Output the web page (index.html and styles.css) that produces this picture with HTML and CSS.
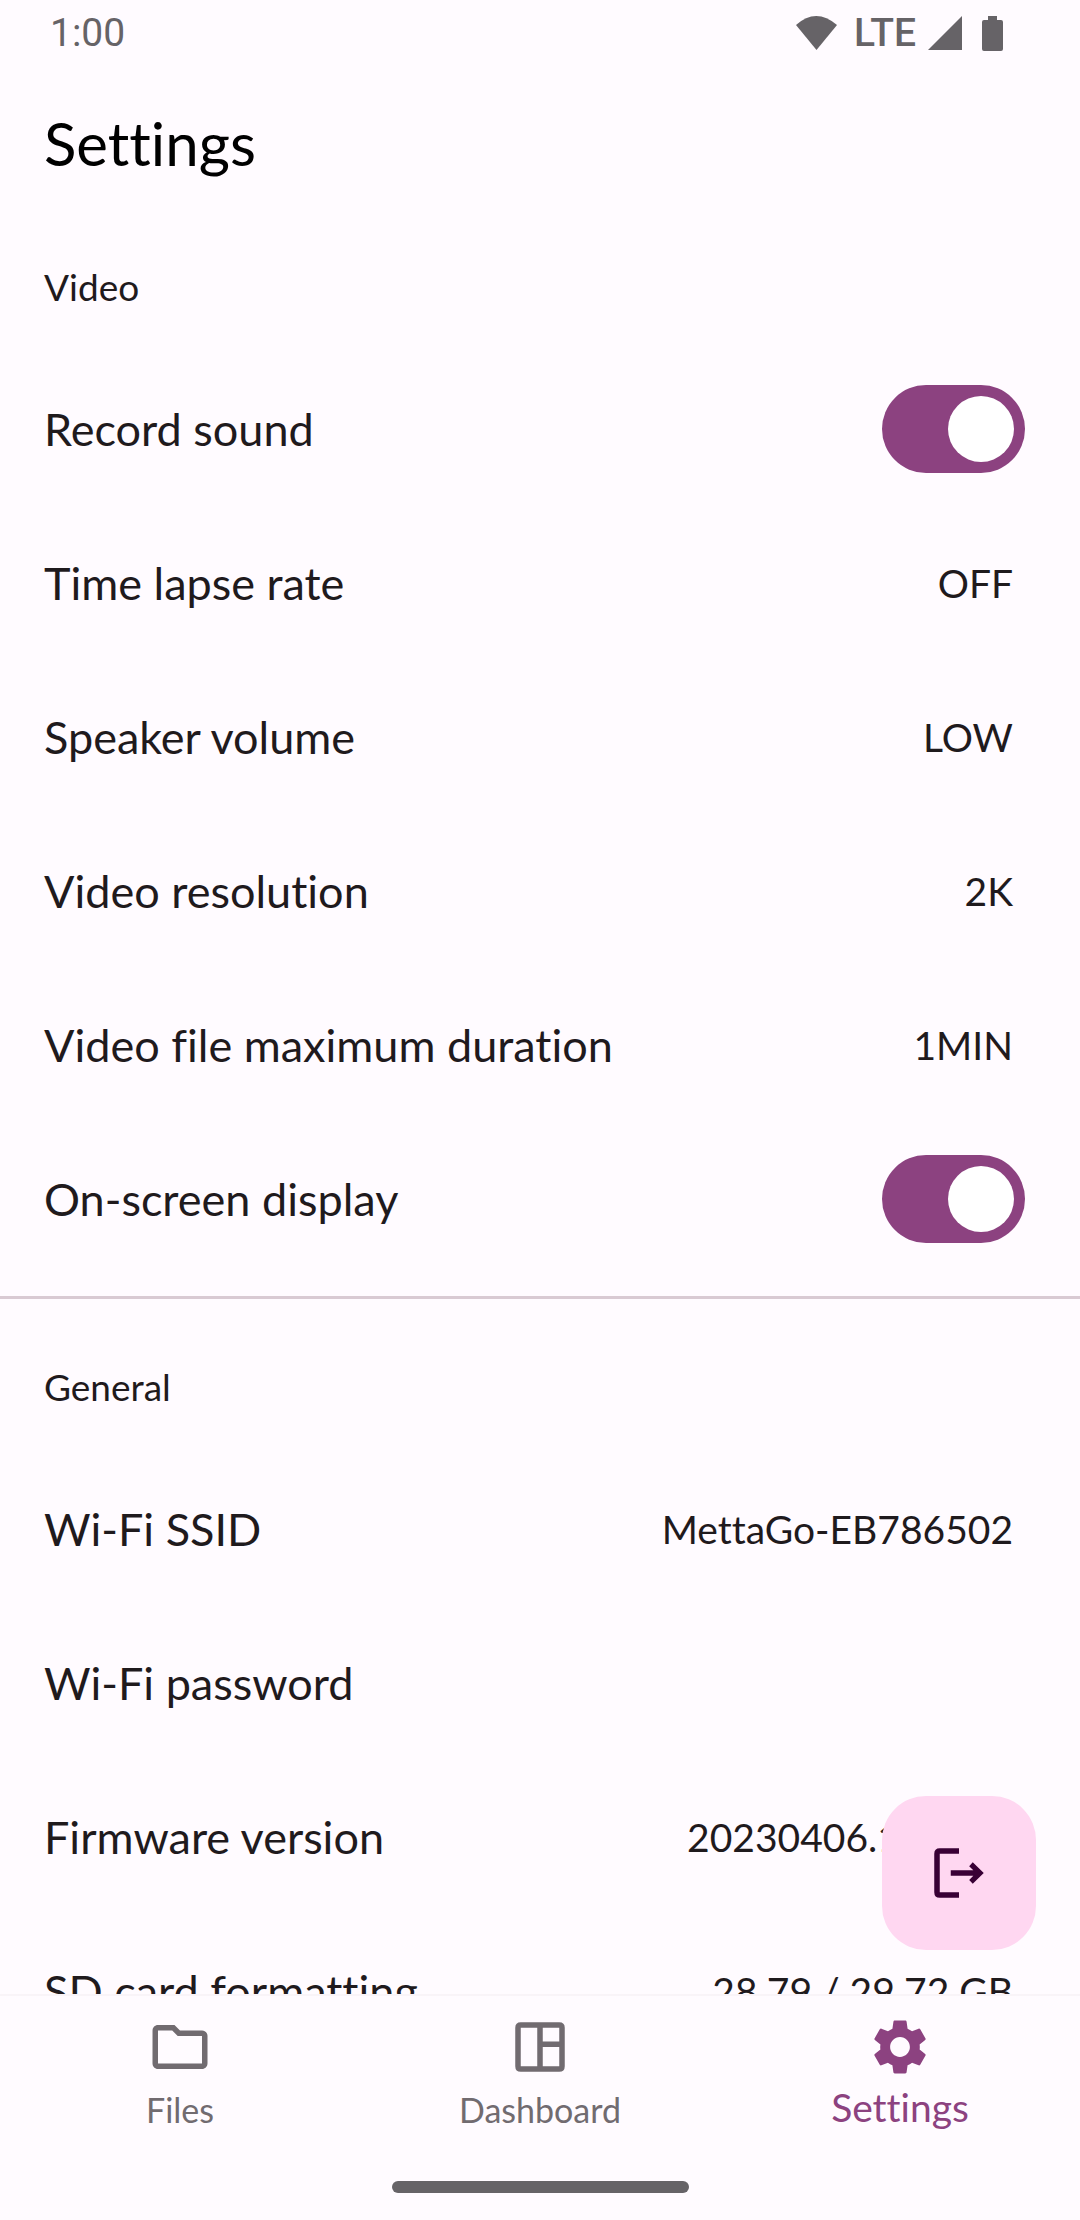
FILE: index.html
```html
<!DOCTYPE html>
<html lang="en">
<head>
    <meta charset="UTF-8">
    <meta name="viewport" content="width=device-width, initial-scale=1.0">
    <title>Settings</title>
    <link rel="stylesheet" href="styles.css">
</head>
<body>
    <div class="status-bar">
        <span class="clock">1:00</span>
        <div class="status-icons">
            <svg class="wifi" viewBox="0 0 41 34"><path d="M0 9Q20 -9 41 9L20.5 34z"/></svg>
            <span class="network">LTE</span>
            <svg class="signal" viewBox="0 0 34 34"><path d="M34 0v34H0z"/></svg>
            <svg class="battery" viewBox="0 0 21 35"><path d="M6 0h9v4h4q2 0 2 2v27q0 2-2 2H2q-2 0-2-2V6q0-2 2-2h4z"/></svg>
        </div>
    </div>

    <header class="app-bar">
        <h1>Settings</h1>
    </header>

    <div class="content">
        <main class="list">
            <section>
                <h2>Video</h2>
                <div class="row">
                    <label for="record-sound">Record sound</label>
                    <input class="switch" type="checkbox" role="switch" id="record-sound" checked>
                </div>
                <button class="row"><span>Time lapse rate</span><span class="value">OFF</span></button>
                <button class="row"><span>Speaker volume</span><span class="value">LOW</span></button>
                <button class="row"><span>Video resolution</span><span class="value">2K</span></button>
                <button class="row"><span>Video file maximum duration</span><span class="value">1MIN</span></button>
                <div class="row">
                    <label for="osd">On-screen display</label>
                    <input class="switch" type="checkbox" role="switch" id="osd" checked>
                </div>
            </section>
            <hr>
            <section>
                <h2>General</h2>
                <button class="row"><span>Wi-Fi SSID</span><span class="value">MettaGo-EB786502</span></button>
                <button class="row"><span>Wi-Fi password</span></button>
                <button class="row"><span>Firmware version</span><span class="value">20230406.120000</span></button>
                <button class="row"><span>SD card formatting</span><span class="value">28.79 / 29.72 GB</span></button>
            </section>
        </main>

        <button class="fab" aria-label="Disconnect">
            <svg class="icon" viewBox="0 0 24 24"><path d="M5 3h7v2H5v14h7v2H5q-2 0-2-2V5q0-2 2-2zM9 11h8.2l-1.5-1.5L17 8.1l4 3.9-4 3.9-1.3-1.4 1.5-1.5H9z"/></svg>
        </button>
    </div>

    <nav class="bottom-nav">
        <a href="#files" class="tab">
            <svg class="icon" viewBox="0 0 24 24"><path d="M9.17 6l2 2H20v10H4V6h5.17M10 4H4c-1.1 0-1.99.9-1.99 2L2 18c0 1.1.9 2 2 2h16c1.1 0 2-.9 2-2V8c0-1.1-.9-2-2-2h-8l-2-2z"/></svg>
            <span>Files</span>
        </a>
        <a href="#dashboard" class="tab">
            <svg class="icon" viewBox="0 0 24 24"><path fill-rule="evenodd" d="M5 3h14q2 0 2 2v14q0 2-2 2H5q-2 0-2-2V5q0-2 2-2zM5 5v14h6V5zM13 5v5h6V5zM13 12v7h6v-7z"/></svg>
            <span>Dashboard</span>
        </a>
        <a href="#settings" class="tab active">
            <svg class="icon" viewBox="0 0 24 24"><path d="M19.14 12.94c.04-.3.06-.61.06-.94 0-.32-.02-.64-.07-.94l2.03-1.58c.18-.14.23-.41.12-.61l-1.92-3.32c-.12-.22-.37-.29-.59-.22l-2.39.96c-.5-.38-1.03-.7-1.62-.94l-.36-2.54c-.04-.24-.24-.41-.48-.41h-3.84c-.24 0-.43.17-.47.41l-.36 2.54c-.59.24-1.13.57-1.62.94l-2.39-.96c-.22-.08-.47 0-.59.22L2.74 8.87c-.12.21-.08.47.12.61l2.03 1.58c-.05.3-.09.63-.09.94s.02.64.07.94l-2.03 1.58c-.18.14-.23.41-.12.61l1.92 3.32c.12.22.37.29.59.22l2.39-.96c.5.38 1.03.7 1.62.94l.36 2.54c.05.24.24.41.48.41h3.84c.24 0 .44-.17.47-.41l.36-2.54c.59-.24 1.13-.56 1.62-.94l2.39.96c.22.08.47 0 .59-.22l1.92-3.32c.12-.22.07-.47-.12-.61l-2.01-1.58zM12 15.6c-1.98 0-3.6-1.62-3.6-3.6s1.62-3.6 3.6-3.6 3.6 1.62 3.6 3.6-1.62 3.6-3.6 3.6z"/></svg>
            <span>Settings</span>
        </a>
    </nav>
    <div class="home-bar"></div>
</body>
</html>
```

FILE: styles.css
```css
* {
    margin: 0;
    padding: 0;
    box-sizing: border-box;
}
body {
    display: flex;
    flex-direction: column;
    height: 100vh;
    background-color: #fffbff;
    color: #1f1a1d;
    font-family: Lato, sans-serif;
    font-size: 45px;
    font-variant-ligatures: none;
}
svg {
    display: block;
    fill: currentColor;
}
button {
    border: none;
    background: none;
    color: inherit;
    font: inherit;
    font-variant-ligatures: none;
}

.status-bar {
    display: flex;
    align-items: center;
    justify-content: space-between;
    height: 66px;
    padding: 0 77px 0 50px;
    color: #666367;
    font-family: Roboto, sans-serif;
    font-size: 39px;
}
.status-icons {
    display: flex;
    align-items: center;
    font-weight: 500;
}
.wifi {
    width: 41px;
    height: 34px;
    margin-right: 17px;
}
.signal {
    width: 34px;
    height: 34px;
    margin: 0 20px 0 12px;
}
.battery {
    width: 21px;
    height: 35px;
}

.app-bar {
    display: flex;
    align-items: center;
    height: 154px;
    padding: 0 44px;
    color: #000;
}
h1 {
    font-size: 60px;
    font-weight: 400;
    line-height: 72px;
}

.content {
    position: relative;
    flex: 1;
    min-height: 0;
}
.list {
    height: 100%;
    overflow-y: auto;
    scrollbar-width: none;
}
h2 {
    display: flex;
    align-items: center;
    height: 132px;
    padding: 0 44px;
    font-size: 37px;
    font-weight: 400;
}
.row {
    display: flex;
    align-items: center;
    justify-content: space-between;
    width: 100%;
    height: 154px;
    padding: 0 55px 0 44px;
    text-align: left;
}
.value {
    padding-right: 12px;
    font-size: 39px;
}
hr {
    height: 3px;
    margin: 20px 0 21px;
    border: none;
    background-color: #d9cad3;
}

.switch {
    appearance: none;
    display: flex;
    justify-content: flex-start;
    width: 143px;
    height: 88px;
    padding: 11px;
    border-radius: 44px;
    background-color: #80747a;
}
.switch::before {
    content: "";
    width: 66px;
    height: 66px;
    border-radius: 50%;
    background-color: #fff;
}
.switch:checked {
    justify-content: flex-end;
    background-color: #8c4280;
}

.fab {
    position: absolute;
    right: 44px;
    bottom: 44px;
    display: flex;
    align-items: center;
    justify-content: center;
    width: 154px;
    height: 154px;
    border-radius: 44px;
    background-color: #ffd7f1;
    color: #390035;
}
.icon {
    width: 66px;
    height: 66px;
}

.bottom-nav {
    display: flex;
    height: 160px;
    padding-top: 18px;
    border-top: 2px solid #f9f4f8;
}
.tab {
    flex: 1;
    display: flex;
    flex-direction: column;
    align-items: center;
    gap: 8px;
    color: #716b70;
    font-size: 34px;
    line-height: 44px;
    text-decoration: none;
}
.tab.active {
    color: #8c4280;
    font-size: 39px;
    line-height: 38px;
}

.home-bar {
    align-self: center;
    width: 297px;
    height: 12px;
    margin: 27px 0;
    border-radius: 6px;
    background-color: #666367;
}
```
